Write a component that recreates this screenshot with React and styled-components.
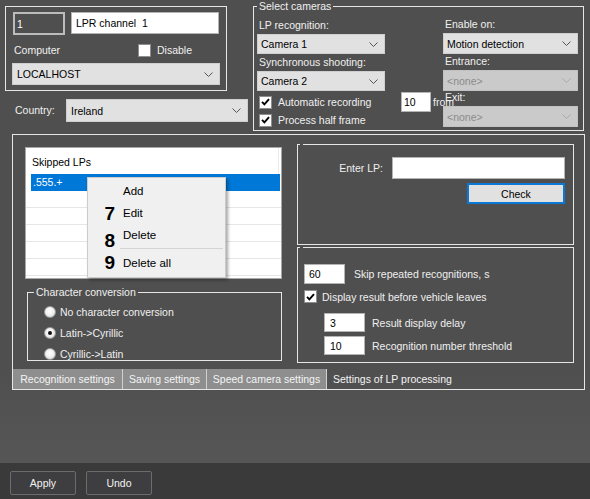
import React from 'react';
import styled, { createGlobalStyle } from 'styled-components';

const GlobalStyle = createGlobalStyle`
  html, body { margin: 0; padding: 0; background: #3a3a3a; }
  body {
    font-family: "Liberation Sans", Arial, sans-serif;
    font-size: 10.5px;
    color: #f0f0f0;
  }
  * { box-sizing: border-box; }
`;

const Window = styled.div`
  width: 590px;
  height: 499px;
  display: flex;
  flex-direction: column;
  overflow: hidden;
`;

const Main = styled.div`
  height: 463px;
  flex: none;
  background: linear-gradient(180deg, #4f4f4f 0%, #4f4f4f 80%, #565656 100%);
`;

const TopRow = styled.div`
  display: flex;
  align-items: flex-start;
`;

const LeftCol = styled.div`
  width: 243px;
  margin-left: 5px;
  padding-top: 6px;
  display: flex;
  flex-direction: column;
`;

const IdentityBox = styled.div`
  width: 222px;
  height: 85px;
  border: 1px solid #e6e6e6;
  padding: 5px 6px 0;
  display: flex;
  flex-direction: column;
`;

const InputRow = styled.div`
  display: flex;
  gap: 6px;
  align-items: flex-start;
`;

const Field = styled.input`
  flex: none;
  width: ${p => p.$w}px;
  height: ${p => p.$h || 20}px;
  margin: 0;
  padding: 0 ${p => p.$pad ?? 4}px;
  font: inherit;
  color: #000;
  background: #fff;
  border: 1px solid #b4b4b4;
  outline: none;
`;

const ChannelNo = styled(Field)`
  margin-left: 1px;
  color: #fff;
  background: transparent;
  border: 2px solid #bcbcbc;
  padding: 0 2px;
`;

const ComputerRow = styled.div`
  display: grid;
  grid-template-columns: 126px auto;
  align-items: center;
  height: 18px;
  margin-top: 6px;
`;

const Text = styled.span`
  display: block;
  line-height: 13px;
  white-space: nowrap;
  color: #f0f0f0;
  margin-top: ${p => p.$mt || 0}px;
  padding-left: ${p => p.$pl || 0}px;
`;

const CheckLabel = styled.label`
  display: flex;
  align-items: center;
  gap: ${p => p.$gap ?? 6}px;
  height: ${p => p.$h || 18}px;
  margin-top: ${p => p.$mt || 0}px;
  margin-left: ${p => p.$ml || 0}px;
  white-space: nowrap;
  color: #f0f0f0;
`;

const CheckBox = styled.span`
  flex: none;
  width: 13px;
  height: 13px;
  background: #fff;
  border: 1px solid #8e8e8e;
  display: inline-flex;
  align-items: center;
  justify-content: center;
`;

function Check({ on }) {
  return (
    <CheckBox>
      {on && (
        <svg width="9" height="8" viewBox="0 0 9 8">
          <path d="M1 3.8 L3.4 6.3 L8 1.2" stroke="#000" strokeWidth="1.9" fill="none" />
        </svg>
      )}
    </CheckBox>
  );
}

const ComboBox = styled.div`
  flex: none;
  width: ${p => p.$w}px;
  height: ${p => p.$h || 21}px;
  margin-top: ${p => p.$mt || 0}px;
  display: flex;
  align-items: center;
  justify-content: space-between;
  padding: 0 6px 0 ${p => p.$pl ?? 3}px;
  background: ${p => (p.$disabled ? '#cacaca' : '#e1e1e1')};
  border: 1px solid ${p => (p.$disabled ? '#c2c2c2' : '#cfcfcf')};
  color: ${p => (p.$disabled ? '#8a8a8a' : '#000')};
  white-space: nowrap;
`;

function Combo({ children, disabled, ...rest }) {
  return (
    <ComboBox $disabled={disabled} {...rest}>
      <span>{children}</span>
      <svg width="9" height="5" viewBox="0 0 9 5">
        <polyline points="0.5,0.5 4.5,4.5 8.5,0.5" fill="none" stroke={disabled ? '#a9a9a9' : '#555'} strokeWidth="1" />
      </svg>
    </ComboBox>
  );
}

const CountryRow = styled.div`
  display: grid;
  grid-template-columns: 61px 182px;
  align-items: center;
  margin-top: 8px;
`;

const GroupBox = styled.fieldset`
  margin: ${p => p.$m || 0};
  min-width: 0;
  width: ${p => p.$w}px;
  height: ${p => p.$h}px;
  border: 1px solid #e6e6e6;
  padding: ${p => p.$pad || 0};
  overflow: ${p => (p.$clip ? 'hidden' : 'visible')};
`;

const Legend = styled.legend`
  margin: 0;
  padding: 0 2px;
  height: 13px;
  line-height: 13px;
  color: #f0f0f0;
  white-space: nowrap;
`;

const EmptyLegend = styled.legend`
  margin: 0;
  padding: 0;
  width: 3px;
  height: 3px;
  font-size: 0;
  line-height: 0;
`;

const CamGrid = styled.div`
  display: flex;
  align-items: flex-start;
`;

const CamCol = styled.div`
  width: ${p => p.$w}px;
  flex: none;
  display: flex;
  flex-direction: column;
  position: relative;
  z-index: ${p => p.$z || 0};
`;

const FromCol = styled.div`
  width: 42px;
  flex: none;
  margin-left: 16px;
  padding-top: 74px;
  display: flex;
  align-items: center;
  gap: 2px;
  white-space: nowrap;
  color: #f0f0f0;
`;

const Panel = styled.div`
  margin: 3px 0 0 12px;
  width: 573px;
  height: 256px;
  border: 1px solid #e6e6e6;
  display: flex;
  flex-direction: column;
`;

const PanelBody = styled.div`
  flex: 1;
  display: flex;
  align-items: flex-start;
  padding-left: 12px;
`;

const ListCol = styled.div`
  width: 257px;
  flex: none;
  padding-top: 12px;
  display: flex;
  flex-direction: column;
`;

const ListBox = styled.div`
  position: relative;
  width: 257px;
  height: 132px;
  background: #fff;
  border: 1px solid #a8a8a8;
  color: #000;
`;

const ListHeader = styled.div`
  height: 26px;
  padding: 7px 0 0 6px;
  line-height: 14px;
  border-right: 1px solid #ececec;
  margin-right: 2px;
`;

const ListRow = styled.div`
  height: 17px;
  line-height: 17px;
  margin: ${p => (p.$selected ? '0 1px 0 5px' : '0')};
  padding-left: 2px;
  background: ${p => (p.$selected ? '#0078d7' : 'transparent')};
  color: ${p => (p.$selected ? '#fff' : '#000')};
  border-bottom: ${p => (p.$selected ? 'none' : '1px solid #e6e6e6')};
`;

const Menu = styled.div`
  position: absolute;
  left: 61px;
  top: 29px;
  width: 139px;
  padding: 2px 2px 3px;
  background: #f0f0f0;
  border: 1px solid #cccccc;
  box-shadow: 2px 2px 3px rgba(0, 0, 0, 0.35);
  display: grid;
  grid-template-columns: 32px 1fr;
  grid-template-rows: 22px 22px 22px 6px 22px;
  font-size: 11.5px;
  color: #000;
`;

const MenuNum = styled.span`
  font-size: 19px;
  font-weight: bold;
  line-height: 22px;
  height: 22px;
  text-align: right;
  padding-right: 7px;
  margin-top: ${p => p.$drop || 0}px;
`;

const MenuLabel = styled.span`
  line-height: 22px;
  padding-left: 1px;
`;

const MenuSep = styled.div`
  grid-column: 1 / -1;
  height: 6px;
  display: flex;
  align-items: flex-start;
  padding: 2px 0 0 30px;
  &::after {
    content: '';
    flex: 1;
    height: 1px;
    background: #d4d4d4;
  }
`;

const RadioRow = styled.label`
  display: flex;
  align-items: center;
  gap: 4px;
  height: 21px;
  margin-left: 10px;
  color: #f0f0f0;
  white-space: nowrap;
`;

const RadioDot = styled.span`
  flex: none;
  width: 12px;
  height: 12px;
  border-radius: 50%;
  border: 1px solid #9a9a9a;
  background: radial-gradient(circle at 45% 40%, #ffffff 0%, #f2f2f2 45%, #cdcdcd 100%);
  display: inline-flex;
  align-items: center;
  justify-content: center;
  &::after {
    content: '';
    width: 4px;
    height: 4px;
    border-radius: 50%;
    background: ${p => (p.$on ? '#111' : 'transparent')};
  }
`;

const RightCol = styled.div`
  width: 277px;
  flex: none;
  margin-left: 15px;
  padding-top: 8px;
  display: flex;
  flex-direction: column;
`;

const LpGrid = styled.div`
  display: grid;
  grid-template-columns: 1fr 173px;
  column-gap: 9px;
  row-gap: 4px;
  align-items: center;
  padding-top: 11px;
`;

const RightLabel = styled.span`
  text-align: right;
  color: #f0f0f0;
`;

const CheckButton = styled.button`
  grid-column: 2;
  justify-self: end;
  width: 98px;
  height: 21px;
  margin: 0;
  padding: 0;
  background: #e1e1e1;
  border: 2px solid #0a78d4;
  color: #000;
  font: inherit;
`;

const OptRow = styled.div`
  display: flex;
  align-items: center;
  gap: ${p => p.$gap || 9}px;
  padding-left: ${p => p.$indent || 4}px;
  margin-top: ${p => p.$mt || 0}px;
  white-space: nowrap;
  color: #f0f0f0;
`;

const TabStrip = styled.div`
  flex: none;
  height: 20px;
  display: flex;
`;

const Tab = styled.div`
  flex: none;
  width: ${p => (p.$w ? `${p.$w}px` : 'auto')};
  height: 20px;
  line-height: 20px;
  background: ${p => (p.$active ? 'transparent' : '#8e8e8e')};
  border-right: ${p => (p.$active ? 'none' : '1px solid #d0d0d0')};
  color: #f4f4f4;
  text-align: ${p => (p.$active ? 'left' : 'center')};
  padding-left: ${p => (p.$active ? 6 : 0)}px;
  white-space: nowrap;
`;

const Footer = styled.div`
  flex: 1;
  background: #3a3a3a;
  display: flex;
  align-items: flex-start;
  gap: 10px;
  padding: 8px 10px;
`;

const Button = styled.button`
  width: 66px;
  height: 24px;
  margin: 0;
  padding: 0;
  background: #3e3e41;
  border: 1px solid #6c6c6c;
  border-radius: 2px;
  color: #f2f2f2;
  font: inherit;
  font-size: 10.5px;
`;

export default function App() {
  return (
    <>
      <GlobalStyle />
      <Window>
        <Main>
          <TopRow>
            <LeftCol>
              <IdentityBox>
                <InputRow>
                  <ChannelNo $w={52} $h={23} defaultValue="1" readOnly />
                  <Field $w={148} $h={22} defaultValue="LPR channel  1" readOnly />
                </InputRow>
                <ComputerRow>
                  <Text $pl={2}>Computer</Text>
                  <CheckLabel>
                    <Check />
                    Disable
                  </CheckLabel>
                </ComputerRow>
                <Combo $w={208} $h={22} $mt={4} $pl={4}>LOCALHOST</Combo>
              </IdentityBox>
              <CountryRow>
                <Text $pl={10}>Country:</Text>
                <Combo $w={182} $h={23} $pl={4}>Ireland</Combo>
              </CountryRow>
            </LeftCol>

            <GroupBox $w={331} $h={131} $m="0 0 0 5px" $pad="5px 5px 0 3px">
              <Legend>Select cameras</Legend>
              <CamGrid>
                <CamCol $w={128}>
                  <Text $mt={1} $pl={2}>LP recognition:</Text>
                  <Combo $w={128} $h={20} $mt={2}>Camera 1</Combo>
                  <Text $mt={2} $pl={2}>Synchronous shooting:</Text>
                  <Combo $w={128} $h={20} $mt={2}>Camera 2</Combo>
                  <CheckLabel $mt={2} $ml={2}>
                    <Check on />
                    Automatic recording
                  </CheckLabel>
                  <CheckLabel $ml={2}>
                    <Check on />
                    Process half frame
                  </CheckLabel>
                </CamCol>
                <FromCol>
                  <Field $w={30} $h={20} $pad={2} defaultValue="10" readOnly />
                  <span>from</span>
                </FromCol>
                <CamCol $w={135} $z={1}>
                  <Text $pl={2}>Enable on:</Text>
                  <Combo $w={135} $mt={2}>Motion detection</Combo>
                  <Text $mt={1} $pl={2}>Entrance:</Text>
                  <Combo $w={135} $mt={2} disabled>&lt;none&gt;</Combo>
                  <Text $pl={2}>Exit:</Text>
                  <Combo $w={135} $mt={2} disabled>&lt;none&gt;</Combo>
                </CamCol>
              </CamGrid>
            </GroupBox>
          </TopRow>

          <Panel>
            <PanelBody>
              <ListCol>
                <ListBox>
                  <ListHeader>Skipped LPs</ListHeader>
                  <ListRow $selected>.555.+</ListRow>
                  <ListRow />
                  <ListRow />
                  <ListRow />
                  <ListRow />
                  <ListRow />
                  <Menu>
                    <MenuNum />
                    <MenuLabel>Add</MenuLabel>
                    <MenuNum $drop={1}>7</MenuNum>
                    <MenuLabel>Edit</MenuLabel>
                    <MenuNum $drop={6}>8</MenuNum>
                    <MenuLabel>Delete</MenuLabel>
                    <MenuSep />
                    <MenuNum>9</MenuNum>
                    <MenuLabel>Delete all</MenuLabel>
                  </Menu>
                </ListBox>

                <GroupBox $w={255} $h={75} $m="7px 0 0 2px" $pad="2px 0 0 6px" $clip>
                  <Legend>Character conversion</Legend>
                  <RadioRow>
                    <RadioDot />
                    No character conversion
                  </RadioRow>
                  <RadioRow>
                    <RadioDot $on />
                    Latin-&gt;Cyrillic
                  </RadioRow>
                  <RadioRow>
                    <RadioDot />
                    Cyrillic-&gt;Latin
                  </RadioRow>
                </GroupBox>
              </ListCol>

              <RightCol>
                <GroupBox $w={277} $h={102} $pad="0 8px 0 2px">
                  <EmptyLegend />
                  <LpGrid>
                    <RightLabel>Enter LP:</RightLabel>
                    <Field $w={173} $h={22} defaultValue="" readOnly />
                    <CheckButton>Check</CheckButton>
                  </LpGrid>
                </GroupBox>
                <GroupBox $w={277} $h={117} $m="1px 0 0" $pad="15px 8px 0 2px">
                  <EmptyLegend />
                  <OptRow>
                    <Field $w={41} $h={20} defaultValue="60" readOnly />
                    Skip repeated recognitions, s
                  </OptRow>
                  <OptRow $mt={6} $gap={5}>
                    <Check on />
                    Display result before vehicle leaves
                  </OptRow>
                  <OptRow $mt={10} $indent={24} $gap={7}>
                    <Field $w={41} $h={19} $pad={5} defaultValue="3" readOnly />
                    Result display delay
                  </OptRow>
                  <OptRow $mt={4} $indent={24} $gap={7}>
                    <Field $w={41} $h={19} $pad={5} defaultValue="10" readOnly />
                    Recognition number threshold
                  </OptRow>
                </GroupBox>
              </RightCol>
            </PanelBody>

            <TabStrip>
              <Tab $w={110}>Recognition settings</Tab>
              <Tab $w={84}>Saving settings</Tab>
              <Tab $w={120}>Speed camera settings</Tab>
              <Tab $active>Settings of LP processing</Tab>
            </TabStrip>
          </Panel>
        </Main>

        <Footer>
          <Button>Apply</Button>
          <Button>Undo</Button>
        </Footer>
      </Window>
    </>
  );
}
